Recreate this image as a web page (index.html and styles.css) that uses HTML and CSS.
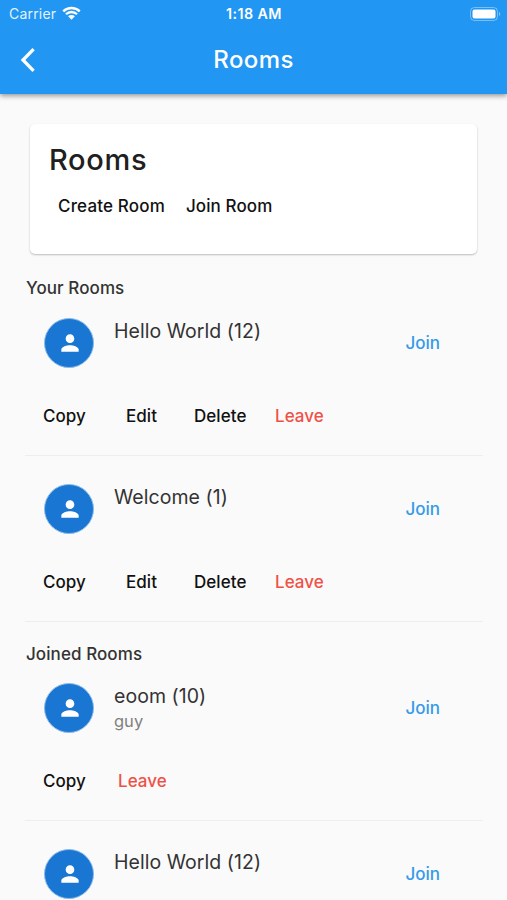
FILE: index.html
```html
<!DOCTYPE html>
<html lang="en">
<head>
<meta charset="utf-8">
<title>Rooms</title>
<link rel="stylesheet" href="styles.css">
</head>
<body>
<svg width="0" height="0" class="defs"><symbol id="person" viewBox="0 0 24 24"><path d="M12 12c2.21 0 4-1.79 4-4s-1.79-4-4-4-4 1.79-4 4 1.79 4 4 4zm0 2c-2.67 0-8 1.34-8 4v2h16v-2c0-2.66-5.33-4-8-4z"/></symbol></svg>
<header class="appbar">
  <div class="status">
    <div class="carrier"><span>Carrier</span>
      <svg class="wifi" viewBox="0 0 20 15"><path d="M1.3 5.2a12.6 12.6 0 0 1 17.4 0M4.2 8.3a8.4 8.4 0 0 1 11.6 0" fill="none" stroke="#fff" stroke-width="2.5"/><path d="M6.4 10.5a5.2 5.2 0 0 1 7.2 0L10 14z" fill="#fff"/></svg>
    </div>
    <div class="time">1:18 AM</div>
    <svg class="battery" viewBox="0 0 32 14"><rect x=".5" y=".5" width="27" height="13" rx="4" fill="none" stroke="#fff" stroke-opacity=".4"/><rect x="2.5" y="2.5" width="23" height="9" rx="2" fill="#fff"/><path d="M29 5a2.2 2.2 0 0 1 0 4z" fill="#fff" fill-opacity=".45"/></svg>
  </div>
  <div class="titlebar">
    <svg class="back" viewBox="0 0 16 26"><path d="M13.6 2.2 3 13l10.6 10.8" fill="none" stroke="#fff" stroke-width="3.3"/></svg>
    <h1>Rooms</h1>
  </div>
</header>
<main>
  <section class="card">
    <h2>Rooms</h2>
    <div class="links"><span class="create">Create Room</span><span class="joinroom">Join Room</span></div>
  </section>
  <h3>Your Rooms</h3>
  <article class="room">
    <div class="top"><div class="avatar"><svg><use href="#person"/></svg></div><div class="name">Hello World (12)</div><span class="join">Join</span></div>
    <div class="actions"><span class="copy">Copy</span><span class="edit">Edit</span><span class="delete">Delete</span><span class="leave">Leave</span></div>
  </article>
  <article class="room">
    <div class="top"><div class="avatar"><svg><use href="#person"/></svg></div><div class="name">Welcome (1)</div><span class="join">Join</span></div>
    <div class="actions"><span class="copy">Copy</span><span class="edit">Edit</span><span class="delete">Delete</span><span class="leave">Leave</span></div>
  </article>
  <h3 class="second">Joined Rooms</h3>
  <article class="room">
    <div class="top"><div class="avatar"><svg><use href="#person"/></svg></div><div class="name">eoom (10)<small>guy</small></div><span class="join">Join</span></div>
    <div class="actions joined"><span class="copy">Copy</span><span class="leave">Leave</span></div>
  </article>
  <article class="room last">
    <div class="top"><div class="avatar"><svg><use href="#person"/></svg></div><div class="name">Hello World (12)</div><span class="join">Join</span></div>
  </article>
</main>
</body>
</html>
```
FILE: styles.css
```css
* { box-sizing: border-box; }
body { margin: 0; background: #fafafa; color: #202020; font-family: Inter, "Liberation Sans", sans-serif; }
h1, h2, h3 { margin: 0; font-weight: 500; }
.defs { display: block; height: 0; }
.appbar { height: 94px; background: #2196f3; color: #fff; box-shadow: 0 2px 5px rgba(0,0,0,.4); }
.status { height: 27px; display: grid; grid-template-columns: 1fr auto 1fr; align-items: center; padding: 0 5px 0 9px; font-size: 14px; }
.carrier { display: flex; align-items: center; gap: 6px; letter-spacing: .2px; color: #e3f2fd; }
.wifi { width: 19px; height: 15px; }
.time { font-weight: 600; font-size: 14.3px; letter-spacing: .4px; margin-left: -3px; }
.battery { width: 32px; height: 14px; justify-self: end; }
.titlebar { height: 66px; display: grid; grid-template-columns: 40px 1fr 40px; align-items: center; }
.back { width: 16px; height: 26px; margin: -1px 0 0 20px; }
h1 { margin-top: -2px; font-size: 24px; text-align: center; letter-spacing: .4px; }
main { height: 806px; overflow: hidden; padding: 30px 22px 0 26px; }
.card { height: 130px; margin: 0 8px 0 4px; padding: 18px 19px; background: #fff; border-radius: 5px; box-shadow: 0 1px 2px rgba(0,0,0,.25); }
h2 { font-size: 29px; line-height: 36px; letter-spacing: .7px; }
.links { display: flex; gap: 21px; padding: 18px 9px; font-size: 17px; line-height: 21px; font-weight: 500; color: #111; letter-spacing: .17px; }
.joinroom { letter-spacing: .1px; }
h3 { height: 44px; font-size: 17px; line-height: 21px; padding-top: 24px; letter-spacing: .08px; color: #333; }
.second { height: 41px; padding-top: 22px; }
.room { width: 458px; height: 158px; margin-left: -1px; padding-left: 1px; border-bottom: 1px solid #eee; }
.room + .room { height: 166px; padding-top: 8px; }
.room.last { border: 0; }
.top { display: flex; height: 91px; padding: 20px 43px 0 18px; }
.avatar { width: 50px; height: 50px; border: .4px solid #8bbbe8; border-radius: 50%; background: #1976d2; display: grid; place-items: center; }
.avatar svg { width: 26px; height: 26px; margin-left: 1px; fill: #fff; }
.name { margin-left: 20px; flex: 1; font-size: 19.5px; line-height: 26px; letter-spacing: .05px; color: #333; }
.name small { display: block; color: #808080; font-size: 16.5px; line-height: 24px; letter-spacing: 0; }
.join { color: #359be8; font-size: 17px; font-weight: 500; line-height: 50px; letter-spacing: 0; }
.actions { display: flex; padding: 17px 17px 0; font-size: 17px; line-height: 21px; font-weight: 500; color: #111; letter-spacing: .05px; }
.copy { width: 83px; }
.edit { width: 68px; }
.delete { width: 81px; }
.leave { color: #ef5148; }
.joined .copy { width: 75px; }
```
